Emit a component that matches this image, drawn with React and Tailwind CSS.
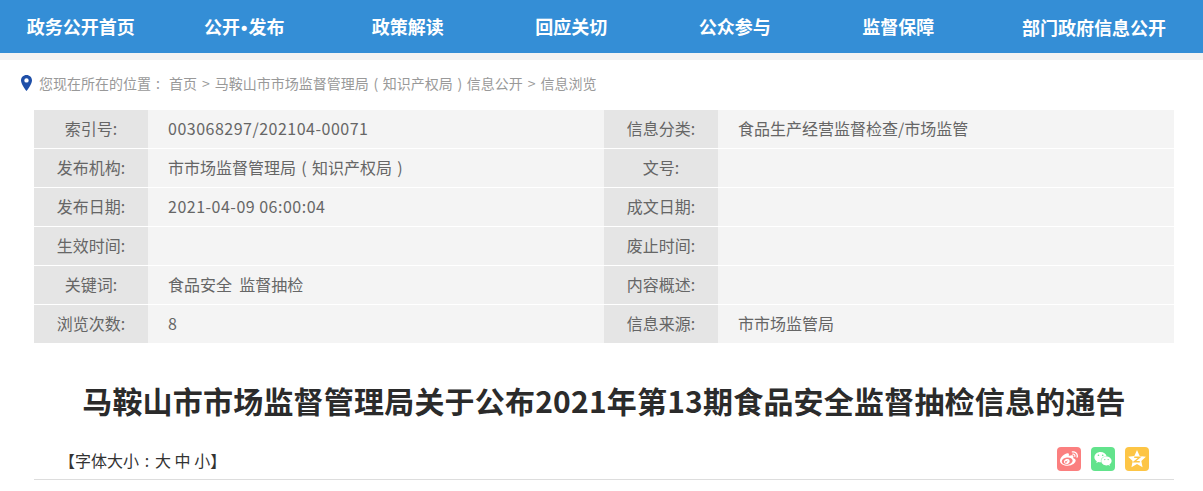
import { FaWeibo, FaWeixin } from 'react-icons/fa'

// full-width punctuation sits centred in the reference, Noto pushes it to one side
const Fw = ({ c }) => <span className="inline-block w-[1em] text-center">{c}</span>
const Sep = () => <span className="mx-[5px]">&gt;</span>

const NAV = [
  '政务公开首页',
  <>公开<span className="mx-px font-['Liberation_Sans']">•</span>发布</>,
  '政策解读',
  '回应关切',
  '公众参与',
  '监督保障',
]

const ROWS = [
  ['索引号:', '003068297/202104-00071', '信息分类:', '食品生产经营监督检查/市场监管'],
  ['发布机构:', <>市市场监督管理局<Fw c="(" />知识产权局<Fw c=")" /></>, '文号:', ''],
  ['发布日期:', '2021-04-09 06:00:04', '成文日期:', ''],
  ['生效时间:', '', '废止时间:', ''],
  ['关键词:', '食品安全  监督抽检', '内容概述:', ''],
  ['浏览次数:', '8', '信息来源:', '市市场监管局'],
]

const isNumeric = v => typeof v === 'string' && /^[\d\s:/-]+$/.test(v)

function Cell({ label, value }) {
  return (
    <>
      <div className="w-[114px] shrink-0 bg-[#e5e5e5] text-center">{label}</div>
      <div className={`flex-1 pl-5 whitespace-pre ${isNumeric(value) ? 'tracking-[0.5px]' : ''}`}>{value}</div>
    </>
  )
}

export default function App() {
  return (
    <div className="h-[491px] overflow-hidden bg-white font-['Noto_Sans_CJK_SC',sans-serif]">
      <div className="flex h-[53px] items-center bg-[#348ed6] text-lg font-bold text-white">
        <div className="flex w-[981px] shrink-0 -translate-x-px">
          {NAV.map((n, i) => (
            <div key={i} className="flex-1 text-center">{n}</div>
          ))}
        </div>
        <div className="flex-1 pl-[41px]">部门政府信息公开</div>
      </div>
      <div className="h-[7px] bg-[#f3f3f3]" />

      <div className="flex h-[50px] items-center gap-[7px] pb-1 pl-[21px] text-sm text-[#999]">
        <svg width="11" height="16" viewBox="0 0 11 16">
          <path fillRule="evenodd" fill="#1f4fa8" d="M5.5 0C2.4 0 0 2.4 0 5.4 0 9.2 5.5 16 5.5 16S11 9.2 11 5.4C11 2.4 8.6 0 5.5 0zm0 3.2a2.2 2.2 0 1 1 0 4.4 2.2 2.2 0 0 1 0-4.4z" />
        </svg>
        <span className="whitespace-pre">
          您现在所在的位置<Fw c=":" /><span className="ml-1">首页</span><Sep />马鞍山市市场监督管理局<Fw c="(" />知识产权局<Fw c=")" />信息公开<Sep />信息浏览
        </span>
      </div>

      <div className="ml-[34px] w-[1140px] text-base text-[#666]">
        {ROWS.map((r, i) => (
          <div key={r[0]} className={`flex bg-[#f4f4f4] leading-[37px] ${i < 5 ? 'h-[39px] border-b border-white' : 'h-[38px]'}`}>
            <Cell label={r[0]} value={r[1]} />
            <Cell label={r[2]} value={r[3]} />
          </div>
        ))}
      </div>

      <h1 className="mt-[35px] ml-[34px] w-[1140px] text-center text-[30px] leading-[44px] font-bold tracking-[0.2px] text-[#2b2b2b]">
        马鞍山市市场监督管理局关于公布2021年第13期食品安全监督抽检信息的通告
      </h1>

      <div className="mt-[25px] ml-[34px] flex h-[33px] w-[1140px] items-start justify-between border-b border-[#ddd] pr-[25px] pl-[25px]">
        <span className="text-base leading-[26px] whitespace-pre text-[#333]">【字体大小<Fw c=":" />大 中 小】</span>
        <div className="flex gap-[10px]">
          <div className="flex size-6 items-center justify-center rounded bg-[#fb7f7f] text-white"><FaWeibo size={18} /></div>
          <div className="flex size-6 items-center justify-center rounded bg-[#62e38c] text-white"><FaWeixin size={18} /></div>
          <div className="flex size-6 items-center justify-center rounded bg-[#fdc545]">
            <svg width="20" height="20" viewBox="0 0 18 18">
              <path fill="#fff" d="M9 1l2.4 5.2 5.6.7-4.1 3.9 1.1 5.6L9 13.6l-5 2.8 1.1-5.6L1 6.9l5.6-.7z" />
              <path fill="none" stroke="#fdc545" strokeWidth="1.3" d="M6.5 7.5h5l-5 4h5" />
            </svg>
          </div>
        </div>
      </div>
    </div>
  )
}
